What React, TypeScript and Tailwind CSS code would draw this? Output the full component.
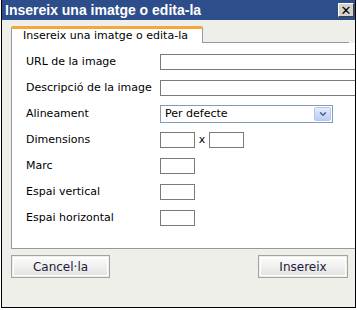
import { ChevronDown } from "lucide-react";

const fields = [
  { label: "URL de la image", kind: "wide" },
  { label: "Descripció de la image", kind: "wide" },
  { label: "Alineament", kind: "select" },
  { label: "Dimensions", kind: "dims" },
  { label: "Marc", kind: "small" },
  { label: "Espai vertical", kind: "small" },
  { label: "Espai horizontal", kind: "small" },
];

function SmallBox() {
  return <div className="w-[35px] h-[16px] shrink-0 border border-[#7a7a7a] bg-white" />;
}

function Control({ kind }: { kind: string }) {
  if (kind === "wide") {
    return <div className="w-[230px] h-[16px] shrink-0 border border-[#7a7a7a] bg-white" />;
  }
  if (kind === "select") {
    return (
      <div className="w-[173px] h-[18px] shrink-0 border border-[#7f9db9] bg-white flex items-center">
        <span className="flex-1 pl-[4px] text-[11px] text-black">Per defecte</span>
        <div className="w-[17px] h-[14px] mr-[1px] rounded-[2px] bg-gradient-to-b from-[#e3ebfc] to-[#b9cdf5] border border-[#b5c8f0] flex items-center justify-center">
          <ChevronDown size={10} strokeWidth={3.5} className="text-[#4d6185]" />
        </div>
      </div>
    );
  }
  if (kind === "dims") {
    return (
      <div className="flex items-center shrink-0">
        <SmallBox />
        <span className="w-[14px] text-center text-[11px] text-black">x</span>
        <SmallBox />
      </div>
    );
  }
  return <SmallBox />;
}

function Button({ label, w }: { label: string; w: string }) {
  return (
    <div className={`${w} h-[23px] border border-[#a3a3a3] p-px`}>
      <div className="w-full h-full border border-white bg-gradient-to-b from-[#fbfbfb] to-[#e4e4e2] flex items-center justify-center text-[12px] text-[#1c1c3c]">
        {label}
      </div>
    </div>
  );
}

export default function App() {
  return (
    <div
      className="w-[357px] h-[310px] bg-white overflow-hidden pl-px"
      style={{ fontFamily: '"DejaVu Sans", sans-serif' }}
    >
      <div className="w-[355px] h-[308px] border-l border-r border-b border-black bg-[#efefea] flex flex-col overflow-hidden">
        {/* Title bar */}
        <div className="h-[20px] bg-[#2e4d8b] flex items-center justify-between pl-[3px] pr-[1px]">
          <span
            className="text-white font-bold text-[14px]"
            style={{ fontFamily: '"Liberation Sans", sans-serif' }}
          >
            Insereix una imatge o edita-la
          </span>
          <div className="w-[16px] h-[14px] bg-[#d6d3ce] border border-t-white border-l-white border-r-[#404040] border-b-[#404040] flex items-center justify-center text-[13px] font-bold leading-none text-black">
            ✕
          </div>
        </div>

        {/* Tabs */}
        <div className="flex mt-[6px] pl-[9px] h-[17px]">
          <div className="w-[192px] bg-white border-t-[3px] border-t-[#f4a73a] border-l border-r border-[#919b9c] rounded-t-[2px] flex items-center pl-[11px] text-[11px] text-black">
            Insereix una imatge o edita-la
          </div>
          <div className="w-[146px] border-b border-[#919b9c]" />
        </div>

        {/* Panel */}
        <div className="ml-[9px] w-[360px] bg-white border-l border-b border-[#919b9c] pt-[6px] pb-[17px] pl-[14px]">
          {fields.map((f) => (
            <div key={f.label} className="h-[26px] flex items-center">
              <span className="w-[134px] shrink-0 text-[11px] text-black">{f.label}</span>
              <Control kind={f.kind} />
            </div>
          ))}
        </div>

        {/* Buttons */}
        <div className="flex justify-between pl-[9px] pr-[7px] mt-[6px]">
          <Button label="Cancel·la" w="w-[99px]" />
          <Button label="Insereix" w="w-[90px]" />
        </div>
      </div>
    </div>
  );
}
